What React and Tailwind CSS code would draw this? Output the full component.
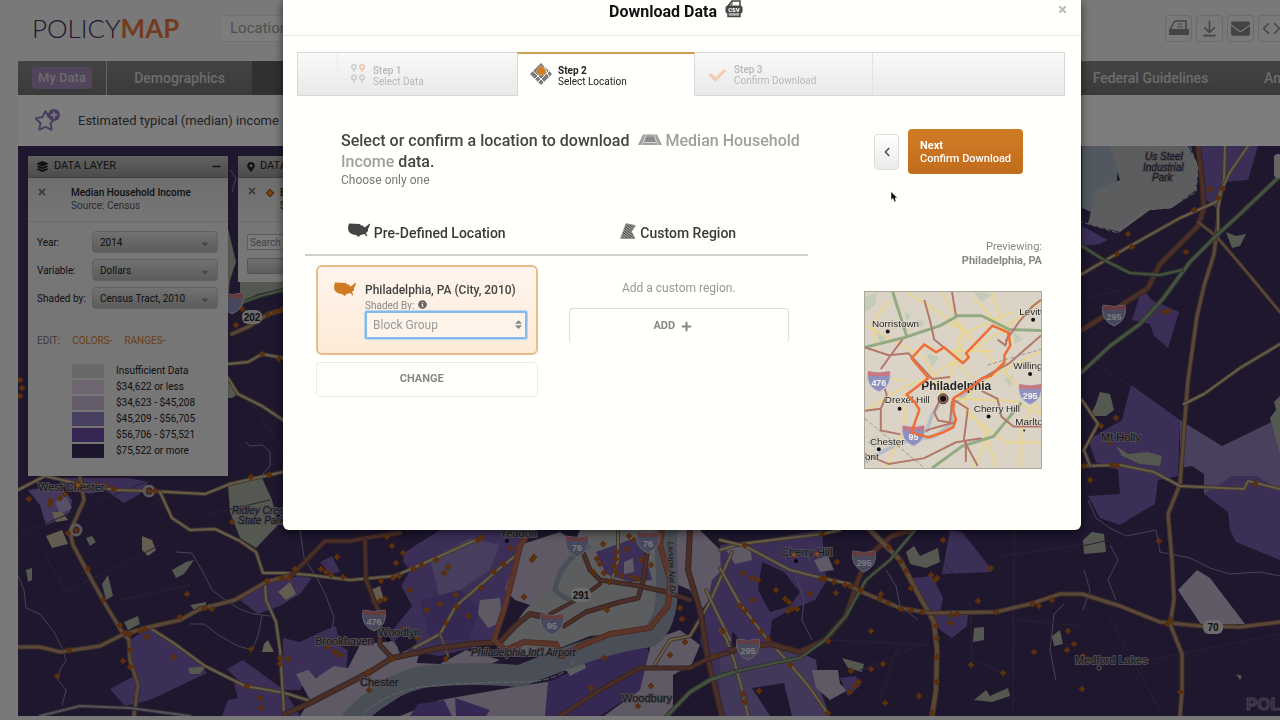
import {
  FaCaretDown,
  FaCheck,
  FaChevronLeft,
  FaEnvelope,
  FaInfoCircle,
  FaLayerGroup,
  FaMapMarkerAlt,
  FaMinus,
  FaPlus,
  FaRegStar,
  FaSort,
  FaTimes,
} from "react-icons/fa";
import { ArrowDownToLine, Code } from "lucide-react";

const legend = [
  { label: "Insufficient Data", color: "bg-[#d2d2d2]" },
  { label: "$34,622 or less", color: "bg-[#dccfe2]" },
  { label: "$34,623 - $45,208", color: "bg-[#cbb9d8]" },
  { label: "$45,209 - $56,705", color: "bg-[#927fc0]" },
  { label: "$56,706 - $75,521", color: "bg-[#6b4ca6]" },
  { label: "$75,522 or more", color: "bg-[#3a2c5a]" },
];

const filters = [
  { id: "year", label: "Year:", value: "2014" },
  { id: "variable", label: "Variable:", value: "Dollars" },
  { id: "shaded", label: "Shaded by:", value: "Census Tract, 2010" },
];

// tracts and land cover, drawn bottom to top
const areas = [
  // west
  ["#765cae", "60,478 130,478 148,482 140,494 124,503 105,490 90,494 66,490"],
  ["#8a70bc", "28,490 60,486 72,500 70,512 58,520 46,525 40,505"],
  ["#b0a0cc", "55,502 66,496 72,508 60,514"],
  ["#765cae", "148,628 165,638 200,663 207,673 150,700 125,706 110,689 134,676 130,640"],
  ["#765cae", "243,660 284,690 300,716 222,716 228,700 238,698 234,684 240,682 227,669"],
  ["#765cae", "258,614 245,604 240,600 268,582 300,576 312,578 300,594 280,606"],
  ["#765cae", "283,638 300,642 325,630 336,626 340,646 348,650 346,672 330,680 310,675 300,690 283,690"],
  ["#765cae", "320,562 332,556 340,572 330,574"],
  ["#beb2cc", "296,674 308,670 316,678 334,666 348,668 360,645 400,640 420,650 410,690 370,716 300,716 310,700"],
  // city and suburbs
  ["#765cae", "405,552 440,530 530,530 520,570 506,600 495,642 440,656 400,650 388,636 412,606 398,580"],
  ["#8c7cb8", "430,560 470,538 500,545 490,570 460,590 440,600"],
  ["#6b50a4", "420,600 460,590 480,610 468,640 430,640"],
  ["#3c2e5c", "395,640 408,630 420,632 416,644 400,654"],
  ["#3c2e5c", "366,560 392,548 410,570 398,592 376,590"],
  ["#beb2cc", "520,545 560,532 580,545 560,585 545,610 515,600 505,590"],
  ["#beb2cc", "480,600 500,598 502,622 488,628 478,614"],
  ["#b8babe", "500,645 525,610 560,575 580,530 668,530 668,600 640,632 590,636 545,654 500,656"],
  ["#beb2cc", "590,552 612,545 618,565 600,572"],
  ["#765cae", "596,552 640,536 652,580 630,582 606,574"],
  ["#beb2cc", "624,562 633,558 634,572 624,574"],
  ["#beb2cc", "350,700 395,662 440,664 466,650 500,660 470,672 410,672"],
  ["#beb2cc", "400,716 440,700 520,686 560,680 545,716"],
  ["#6b50a4", "410,716 418,704 444,700 452,716"],
  ["#6b50a4", "455,698 490,710 486,716 456,716"],
  ["#6b50a4", "545,716 548,682 570,672 590,650 620,642 642,636 652,660 640,690 600,716"],
  ["#b8babe", "560,660 580,652 586,668 570,676"],
  ["#beb2cc", "652,640 680,630 700,645 670,716 604,716 640,690"],
  ["#3c2e5c", "673,675 700,660 720,662 726,716 673,716"],
  ["#beb2cc", "672,530 700,530 722,552 724,580 700,612 690,590 676,584"],
  ["#765cae", "700,640 712,580 732,560 732,716 712,680"],
  // south jersey
  ["#765cae", "720,545 760,540 822,530 826,582 815,600 790,610 772,620 768,655 740,640 722,620"],
  ["#3c2e5c", "762,562 784,572 800,592 790,606 770,612 758,590"],
  ["#beb2cc", "725,548 750,546 752,560 735,564"],
  ["#beb2cc", "814,560 828,556 834,570 820,572"],
  ["#8470b4", "720,655 770,640 795,650 816,660 820,690 830,716 720,716"],
  ["#beb2cc", "812,670 838,670 840,684 848,690 830,700 816,688"],
  ["#765cae", "840,678 856,676 860,686 848,696"],
  ["#3c2e5c", "752,688 784,683 792,716 770,716"],
  ["#765cae", "942,574 950,530 962,532 992,570 990,572"],
  ["#765cae", "912,578 932,576 943,598 940,612 968,615 967,626 952,638 940,630"],
  // east edge
  ["#765cae", "1082,146 1112,146 1108,182 1100,200 1082,205"],
  ["#a4b0c0", "1082,146 1120,146 1116,190 1100,216 1082,208"],
  ["#b8babe", "1110,146 1188,146 1198,165 1196,190 1172,208 1150,210 1120,232 1088,224 1096,190 1120,180"],
  ["#765cae", "1198,146 1258,146 1248,180 1225,182 1216,208 1206,200 1204,176"],
  ["#765cae", "1082,226 1108,240 1100,244 1082,246"],
  ["#765cae", "1142,288 1152,300 1179,312 1168,348 1154,336 1150,324 1132,320"],
  ["#765cae", "1131,385 1180,420 1178,476 1158,480 1155,504 1138,514 1120,525 1100,518 1088,496 1120,494 1118,470 1096,462 1088,440 1122,420"],
  ["#9080b8", "1180,420 1222,446 1280,418 1280,490 1228,498 1204,494 1204,474 1192,466 1180,468"],
  ["#765cae", "1204,494 1232,476 1256,476 1280,490 1280,560 1236,542 1230,530 1228,512"],
  ["#c0b2cc", "1197,570 1210,578 1245,624 1202,626 1178,590"],
  // parks
  ["#a8b0a0", "228,485 262,478 272,500 278,525 256,548 240,538 230,512"],
  ["#a8b0a0", "228,228 236,262 230,280 228,300"],
  ["#a8b0a0", "240,281 283,281 283,288 258,294 240,302"],
  ["#a8b0a0", "228,382 238,394 232,398 228,398"],
  ["#a8b0a0", "1100,392 1110,394 1114,410 1106,416 1090,416 1096,404"],
  ["#a8b0a0", "1116,446 1128,454 1148,452 1162,456 1160,466 1140,464 1122,456"],
  ["#a8b0a0", "1226,232 1236,236 1246,234 1240,246 1232,248"],
  ["#a8b0a0", "1092,532 1104,534 1106,552 1084,554 1083,540"],
  ["#a8b0a0", "906,552 914,546 920,556 938,548 940,562 926,568 910,564"],
  ["#a8b0a0", "974,628 984,627 984,640 973,642"],
  ["#a8b0a0", "1052,636 1060,630 1063,644 1054,646"],
  ["#a8b0a0", "974,700 986,690 990,696 1008,688 1010,696 992,702"],
  ["#a8b0a0", "842,658 864,664 862,672 848,668"],
  ["#a8b0a0", "172,570 186,562 194,560 184,574 176,578"],
  ["#a8b0a0", "124,622 138,616 140,624 128,630"],
  ["#a8b0a0", "102,584 108,575 113,596 106,600"],
  ["#a8b0a0", "26,570 32,568 32,580 28,582"],
  ["#a8b0a0", "86,538 92,536 96,542 90,546"],
  ["#a8b0a0", "188,668 206,666 200,674 190,674"],
  ["#a8b0a0", "190,605 206,602 206,608 194,610"],
  ["#a8b0a0", "1280,396 1274,402 1276,410 1270,418 1280,454"],
  ["#a8b0a0", "1236,674 1242,676 1240,680"],
  ["#c8b8a0", "46,536 62,530 68,544 52,548"],
  ["#c8b8a0", "142,536 152,540 156,550 148,556 142,550"],
  ["#c8b8a0", "52,512 62,512 68,520 56,522"],
  ["#c8b8a0", "278,592 290,582 296,594 286,600"],
  ["#c8b8a0", "370,590 380,586 384,600 372,604"],
  ["#c8b8a0", "264,644 268,640 274,652 262,652"],
];

const creeks = [
  "18,576 24,590 26,608 40,614 54,632 62,648 66,660 60,670 58,680 66,690 62,706",
  "176,552 192,553 204,574 212,590 228,602 242,610 254,614 270,616",
  "190,624 204,624 220,636 238,646 252,650 258,636 262,616",
  "300,530 304,558 318,580 326,596 334,618 332,630",
  "1088,500 1096,518 1110,528 1126,536 1156,530 1160,552 1190,558 1210,568 1230,574 1260,572 1280,576",
  "1110,545 1118,560 1108,580 1116,600",
  "1083,610 1090,590 1084,570",
  "886,570 896,586 900,606 918,620",
  "796,576 804,600 802,620 812,640",
  "1064,604 1054,614 1050,650 1056,680",
  "246,442 250,446 262,445 270,452 270,466 262,475",
  "230,170 236,178 232,192",
];

const roads = [
  ["yellow", 3, "18,490 45,476 75,483 115,490 150,491 205,494 230,484 256,478 283,472"],
  ["yellow", 3, "160,492 172,518 190,530 215,529 240,541 256,552 263,573 285,573 310,575 350,580 395,576 440,556 480,538"],
  ["yellow", 3, "150,628 175,644 205,666 245,686 285,693 310,701"],
  ["yellow", 3, "265,582 266,600 276,622 280,650 284,712"],
  ["yellow", 3, "228,364 248,362 262,354 283,358"],
  ["yellow", 3, "228,378 238,394 262,406 283,420"],
  ["yellow", 3, "414,648 440,634 456,606 500,568 520,552"],
  ["yellow", 2, "440,634 448,656"],
  ["yellow", 3, "618,530 618,560 612,580"],
  ["yellow", 3, "655,664 670,640 690,636 710,602 732,552"],
  ["yellow", 3, "706,590 730,640"],
  ["yellow", 3, "720,550 740,544 822,534 840,530"],
  ["yellow", 3, "720,540 745,546 790,570 822,578 850,584"],
  ["yellow", 3, "720,568 740,604 768,640 790,664 810,688 828,714"],
  ["yellow", 3, "720,630 726,638 734,660 742,690 748,716"],
  ["orange", 4, "80,478 84,500 70,532 73,545 88,573 104,602 122,632 129,640 130,660 138,685 134,715"],
  ["orange", 4, "18,647 40,647 60,652 100,646 122,635 145,628 180,620 200,609 235,600 266,582 292,575"],
  ["brown", 4, "292,575 325,541 350,541 372,537 400,533"],
  ["orange", 4, "232,334 250,326 268,314 283,310"],
  ["brown", 5, "285,714 310,703 370,672 392,658 440,648 470,644 500,642 515,626 530,614 550,618"],
  ["brown", 4, "365,540 366,580 378,610 380,645 392,658"],
  ["brown", 3, "550,614 580,598 600,584"],
  ["brown", 4, "564,626 586,612 620,602 638,598 644,578 648,545"],
  ["brown", 4, "580,545 590,570 600,580 640,586 666,592 690,600"],
  ["brown", 5, "690,530 688,570 700,610 708,660 722,716"],
  ["brown", 4, "560,716 600,690 640,668 690,668 705,660 736,650"],
  ["boundary", 5, "530,530 520,546 512,580 504,610 494,640 506,650 524,642 556,644 562,656 580,646 610,634 650,628 668,606 670,580 660,545 662,530"],
  ["brown", 5, "1198,146 1202,180 1204,208 1198,226 1180,244 1160,264 1148,288 1120,306 1082,330"],
  ["brown", 5, "730,650 770,644 800,652 825,640 846,616 858,580 868,556 892,536 912,530"],
  ["orange", 5, "870,530 900,560 916,590 934,622 937,650 936,690 932,716"],
  ["orange", 4, "850,586 862,592 900,608 930,613 996,612 1030,604 1060,594 1082,594 1120,606 1160,622 1200,626 1240,627 1280,622"],
  ["orange", 4, "1218,222 1214,254 1204,286 1197,316 1192,352 1188,380 1184,430 1180,484 1168,514 1172,560 1174,600 1170,624 1182,654 1182,690 1180,716"],
  ["yellow", 3, "1225,146 1224,180 1218,208 1218,240"],
  ["yellow", 3, "1248,146 1230,172 1216,202 1180,218 1130,246 1082,274"],
  ["orange", 3, "1198,222 1216,236 1240,264 1280,312"],
  ["yellow", 3, "1184,404 1204,394 1240,368 1280,344"],
  ["yellow", 3, "1082,466 1120,465 1154,472 1180,486 1244,489 1248,481 1280,489"],
  ["yellow", 3, "1082,400 1098,424 1084,450 1090,466"],
  ["green", 4, "1280,176 1240,214 1216,236 1190,262 1162,300 1140,324 1110,346 1082,372"],
  ["green", 3, "1082,246 1104,260 1130,273 1160,275 1182,270"],
  ["green", 3, "915,530 890,560 866,580 846,616 825,640 800,658 770,664 720,675"],
  ["green", 4, "667,716 690,692 710,680 734,672"],
  ["green", 3, "238,304 260,296 283,290"],
  ["gray", 3, "40,716 80,706 130,708 160,712 190,716"],
];

const roadColors = {
  yellow: ["#84705c", "#cdb890"],
  orange: ["#7c6050", "#b48e70"],
  brown: ["#70483e", "#945e50"],
  boundary: ["#9c5848", "#b86a54"],
  green: ["#5c6c58", "#8aa480"],
  gray: ["#5c5868", "#a8a4b0"],
};

const markers = [
  [29, 499], [50, 501], [50, 504], [60, 498], [65, 494], [76, 486], [78, 484], [93, 487], [99, 485], [106, 486], [114, 489],
  [149, 491], [155, 491], [251, 477], [269, 475], [232, 522], [68, 533], [76, 530], [88, 569], [103, 600], [120, 625],
  [125, 633], [130, 634], [140, 631], [145, 629], [147, 637], [180, 617], [187, 594], [205, 608], [212, 609], [267, 581],
  [282, 578], [289, 578], [295, 569], [321, 569], [326, 572], [331, 575], [343, 577], [337, 557], [69, 650], [130, 650],
  [123, 661], [130, 667], [57, 676], [174, 657], [247, 686], [260, 698], [261, 708], [251, 649], [280, 658], [288, 659],
  [280, 664], [319, 638], [328, 647], [335, 652], [340, 655], [236, 325], [242, 309], [268, 315], [275, 312], [281, 310],
  [262, 354], [279, 359], [20, 380], [22, 388], [20, 396], [392, 546], [403, 553], [396, 563], [387, 537], [436, 560],
  [448, 567], [444, 573], [414, 569], [422, 565], [399, 576], [393, 578], [381, 581], [410, 590], [456, 595], [440, 604],
  [427, 610], [457, 607], [469, 616], [446, 623], [481, 588], [494, 572], [503, 564], [511, 548], [534, 557], [532, 560],
  [524, 597], [478, 540], [482, 537], [380, 601], [385, 599], [404, 629], [410, 632], [417, 638], [446, 659], [392, 659],
  [368, 672], [369, 690], [603, 544], [597, 559], [600, 564], [593, 572], [604, 573], [617, 552], [616, 559], [615, 566],
  [616, 572], [622, 576], [627, 549], [632, 577], [638, 579], [641, 560], [651, 565], [609, 582], [607, 610], [629, 536],
  [634, 540], [680, 608], [682, 619], [685, 642], [670, 655], [604, 658], [591, 688], [651, 686], [638, 706], [723, 631],
  [715, 656], [745, 545], [794, 555], [817, 554], [822, 534], [837, 562], [743, 573], [752, 578], [758, 580], [776, 590],
  [810, 594], [821, 579], [825, 578], [834, 582], [845, 585], [851, 586], [836, 593], [785, 599], [789, 602], [792, 609],
  [797, 609], [788, 611], [752, 600], [740, 606], [745, 611], [753, 621], [761, 632], [768, 639], [828, 641], [871, 631],
  [861, 590], [881, 594], [880, 599], [888, 603], [901, 609], [911, 610], [922, 612], [889, 547], [901, 561], [906, 571],
  [911, 588], [931, 575], [935, 580], [937, 578], [943, 540], [991, 568], [978, 601], [951, 615], [957, 614], [950, 623],
  [936, 626], [937, 638], [937, 657], [937, 682], [932, 713], [996, 612], [1033, 604], [1039, 606], [1052, 600],
  [1068, 631], [1074, 644], [1067, 650], [1034, 652], [971, 665], [1003, 673], [883, 664], [871, 669], [851, 671],
  [859, 682], [855, 686], [850, 692], [790, 665], [743, 694], [745, 702], [759, 691], [828, 713], [885, 703], [919, 696],
  [1210, 189], [1223, 189], [1218, 198], [1194, 210], [1128, 234], [1132, 247], [1117, 254], [1186, 252], [1164, 312],
  [1168, 311], [1116, 418], [1101, 426], [1110, 442], [1084, 466], [1112, 465], [1117, 466], [1090, 480], [1159, 541],
  [1255, 484], [1167, 624], [1171, 620], [1083, 656], [1082, 689], [1180, 692],
];

const labels = [
  ["West Chester", 38, 491],
  ["Yeadon", 500, 537],
  ["Chester", 360, 686],
  ["Brookhaven", 315, 645],
  ["Woodlyn", 378, 636],
  ["Cherry Hill", 781, 556],
  ["Woodbury", 622, 702],
  ["Mt Holly", 1101, 441],
  ["Medford Lakes", 1075, 664],
];

const Shield = ({ x, y, label }) => (
  <g transform={`translate(${x} ${y})`}>
    <path d="M-11 -9 Q0 -6 11 -9 Q14 6 0 12 Q-14 6 -11 -9Z" fill="#8f91bc" stroke="#c8c8d8" />
    <path d="M-11 -9 Q0 -6 11 -9 L11 -4 L-11 -4Z" fill="#c87880" />
    <text y="6" textAnchor="middle" fontSize="9" fontWeight="700" fill="#f4f4f4">
      {label}
    </text>
  </g>
);

const RouteBadge = ({ x, y, label }) => (
  <g transform={`translate(${x} ${y})`}>
    <rect x="-10" y="-7" width="20" height="14" rx="6" fill="#d8d8d8" />
    <text y="4" textAnchor="middle" fontSize="10" fontWeight="700" fill="#222222">
      {label}
    </text>
  </g>
);

const IncomeMap = () => (
  <svg
    className="absolute inset-0 h-full w-full font-['Liberation_Sans',sans-serif]"
    viewBox="18 146 1262 570"
    preserveAspectRatio="xMinYMin slice"
    aria-label="Median household income map"
  >
    <rect x="18" y="146" width="1600" height="900" fill="#3c2e5c" />
    {areas.map(([fill, points]) => (
      <polygon key={points} points={points} fill={fill} />
    ))}
    <path
      d="M350 722 Q390 680 430 676 T520 676 Q560 660 590 650 T650 636 Q672 620 666 560 V520"
      fill="none"
      stroke="#949fae"
      strokeWidth="22"
    />
    <path
      d="M360 718 Q385 690 430 686 T520 682 T575 658"
      fill="none"
      stroke="#c8c8c8"
      strokeDasharray="6 2"
    />
    <path d="M590 545 Q560 560 555 590 Q575 610 590 590" fill="none" stroke="#949fae" strokeWidth="5" />
    {creeks.map((points) => (
      <polyline key={points} points={points} fill="none" stroke="#8c86a8" strokeWidth="1" />
    ))}
    <g fill="none" stroke="#504468" strokeWidth="1">
      <path d="M18 535 L150 480 M45 555 L66 592 L160 545 M120 600 L190 585 M150 490 L175 520 M205 515 L270 500" />
      <path d="M830 640 L930 645 M900 660 L860 670 L920 645 M970 590 L940 560 M1014 530 L1013 716 M1000 556 L1082 545" />
      <path d="M1082 546 L1110 540 M1108 615 L1160 710 M1130 664 L1280 634 M1090 360 L1130 386 M1082 300 L1120 290" />
      <path d="M1016 620 L1082 626 M970 600 L972 660 L1010 675 M880 700 L900 640 M250 400 L283 450" />
    </g>
    {roads.map(([kind, width, points]) => (
      <g key={points} fill="none" strokeLinejoin="round" strokeLinecap="round">
        <polyline points={points} stroke={roadColors[kind][0]} strokeWidth={width + 1} />
        <polyline points={points} stroke={roadColors[kind][1]} strokeWidth={width - 1} />
      </g>
    ))}
    <path d="M1190 146 L1198 168 L1196 192 L1170 208 L1145 210 L1118 233 L1082 222" fill="none" stroke="#d0d0c8" strokeDasharray="5 2" />
    <g fill="none" stroke="#b4b0bc" strokeWidth="3">
      <circle cx="76" cy="530" r="5" />
      <circle cx="149" cy="491" r="5" />
    </g>
    <g fill="#d09060" stroke="#b05c18" strokeWidth="2">
      {markers.map(([x, y]) => (
        <path key={`${x}-${y}`} d={`M${x} ${y - 2}l2 2l-2 2l-2 -2z`} />
      ))}
    </g>
    <g fontSize="11" fill="#2c2838" stroke="#9c98a4" strokeWidth="2" paintOrder="stroke">
      {labels.map(([label, x, y]) => (
        <text key={label} x={x} y={y}>
          {label}
        </text>
      ))}
      <g fontStyle="italic" fontSize="10">
        <text x="232" y="514">Ridley Creek</text>
        <text x="238" y="524">State Park</text>
        <text x="1145" y="160">Us Steel</text>
        <text x="1143" y="171">Industrial</text>
        <text x="1152" y="181">Park</text>
        <text x="471" y="656">Philadelphia Int'l Airport</text>
        <text x="0" y="0" fontSize="8" transform="translate(668 542) rotate(88)">Lenape Nat Dr</text>
      </g>
    </g>
    <g fill="#f09858" stroke="#b85c18">
      <path d="M794 552l3 3l-3 3l-3 -3z" />
      <path d="M817 551l3 3l-3 3l-3 -3z" />
      <path d="M78 482l3 3l-3 3l-3 -3z" />
    </g>
    <circle cx="507" cy="541" r="2" fill="#111111" />
    <circle cx="388" cy="640" r="2" fill="#111111" />
    <circle cx="796" cy="561" r="2" fill="#111111" />
    <circle cx="1099" cy="668" r="2" fill="#111111" stroke="#c8c8c8" />
    <Shield x={374} y={619} label="476" />
    <Shield x={577} y={545} label="76" />
    <Shield x={648} y={541} label="76" />
    <Shield x={552} y={623} label="95" />
    <Shield x={748} y={648} label="295" />
    <Shield x={864} y={560} label="295" />
    <Shield x={1114} y={314} label="295" />
    <Shield x={232} y={302} label="" />
    <RouteBadge x={252} y={317} label="202" />
    <RouteBadge x={581} y={595} label="291" />
    <RouteBadge x={1213} y={627} label="70" />
    <rect x="1274" y="154" width="20" height="24" rx="4" fill="#c8c8c8" />
    <text x="1246" y="710" fontSize="17" fontWeight="700" fill="#5c5478" stroke="#8c88a0" strokeWidth="1">
      POLICYMAP
    </text>
  </svg>
);

const UsIcon = ({ className }) => (
  <svg className={className} viewBox="0 0 22 15" fill="currentColor" aria-hidden="true">
    <path d="M1 0.5 L12 1 L13 2.5 L15 2.5 L16 4.500 L18 3.500 L20 2 L21 0.5 L22 1.5 L21 4 L20 6 L20 8 L18 10 L19.500 13.500 L18 13 L16.500 11 L12.500 12 L10.500 14 L8 12 L5 11.5 L2 10 L0.5 8 L0 4Z" />
  </svg>
);

const RegionIcon = ({ className }) => (
  <svg className={className} viewBox="0 0 16 16" aria-hidden="true">
    <defs>
      <pattern id="hatch" width="2" height="2" patternUnits="userSpaceOnUse" patternTransform="rotate(-52)">
        <rect width="1.4" height="2" fill="#3f3f3f" />
      </pattern>
    </defs>
    <path d="M6 0.5 L15.5 2.5 L11.5 8.5 L15 15.5 L0.5 15.5Z" fill="url(#hatch)" stroke="#777777" strokeWidth="0.5" />
  </svg>
);

const CsvIcon = ({ className }) => (
  <svg className={className} viewBox="0 0 18 18" fill="none" stroke="#444444" aria-hidden="true">
    <path d="M3 6 L7 1 H15 V6" strokeWidth="1.5" />
    <path d="M7 1 V5 H3" />
    <rect x="1" y="6" width="16" height="7" rx="1.5" fill="#444444" />
    <path d="M3 13 V16.5 H15 V13" strokeWidth="1.5" fill="#aaaaaa" />
    <text x="9" y="12" textAnchor="middle" fontSize="6" fontWeight="900" fill="#ffffff" stroke="none">
      CSV
    </text>
  </svg>
);

// street blocks seen from above, with the picked block in orange
const LocationIcon = ({ className }) => (
  <svg className={className} viewBox="0 0 22 22" aria-hidden="true">
    <path d="M11 0 L22 11 L11 22 L0 11Z" fill="#7c7c7c" />
    <path d="M3 8 L14 19 M8 19 L19 8 M5 16 L9 12 M14 3 L19 14" stroke="#f4f4f0" strokeWidth="1" />
    <path d="M11 2.500 L16 7.500 L14 12 L9 12 L6 8Z" fill="#d07a22" stroke="#e8c8a8" strokeWidth="0.5" />
  </svg>
);

const LayerIcon = ({ className }) => (
  <svg className={className} viewBox="0 0 24 12" aria-hidden="true">
    <path d="M5 0.5 H19 L24 11 H0Z" fill="#a0a0a0" />
    <path d="M8 3 H16 L17 8 H7Z" fill="#8c8c8c" />
    <path d="M4 11 L8 1 M20 11 L16 1 M6 8.500 H18" stroke="#e4e4e0" strokeWidth="0.8" fill="none" />
  </svg>
);

const PinsIcon = ({ className }) => (
  <svg className={className} viewBox="0 0 14 20" fill="none" strokeWidth="1.5" aria-hidden="true">
    <path d="M3 8 V5 M3 18.500 V15.500 M11 18.500 V15.500" stroke="#cccccc" />
    <circle cx="3" cy="3" r="2.200" stroke="#cccccc" />
    <circle cx="3" cy="13.500" r="2.200" stroke="#cccccc" />
    <circle cx="11" cy="13.500" r="2.200" stroke="#cccccc" />
    <path d="M11 8 V5" stroke="#f0c0ac" />
    <circle cx="11" cy="3" r="2.200" stroke="#f0c0ac" />
  </svg>
);

const PrinterIcon = ({ className }) => (
  <svg className={className} viewBox="0 0 20 16" aria-hidden="true">
    <path d="M1 10 L5 2 Q6 1 8 1 H17 V10Z" fill="none" stroke="#888888" strokeWidth="1.5" />
    <path d="M9 4 H14 M8 7 H14" stroke="#888888" />
    <path d="M0 9 H20 V15 H0Z" fill="#888888" />
  </svg>
);

const PreviewMap = () => (
  <svg
    className="block aspect-square w-full border border-[#aaa69c] font-['Liberation_Sans',sans-serif]"
    viewBox="0 0 178 178"
    aria-label="Preview of Philadelphia, PA"
  >
    <rect width="178" height="178" fill="#dbd3c5" />
    <g fill="#c4ccb8">
      <path d="M0 5 L12 0 L10 14 L0 20Z M110 0 L130 2 L118 10Z M62 62 L75 66 L68 76Z M40 20 L46 24 L42 30Z M12 40 L22 46 L16 52Z" />
      <path d="M150 40 L160 48 L152 52Z M2 152 L14 144 L10 158Z M140 88 L150 84 L148 96Z M52 28 L60 30 L56 36Z" />
    </g>
    <g fill="none" stroke="#b8bec6" strokeWidth="4">
      <path d="M0 172 L20 160 L44 150 L70 146 L88 134 L90 112 L108 98 L140 74" />
      <path d="M62 142 L68 124 L76 112" />
    </g>
    <g fill="none" stroke="#e9d590" strokeWidth="2">
      <path d="M42 0 L70 18 L98 36 L120 60 L150 90 L178 120 M0 34 L60 66 L76 100 M78 0 L98 36 L88 80 L76 106" />
      <path d="M128 0 L140 34 M0 120 L40 96 L66 86 L130 44 L178 10 M20 178 L40 140 L40 100 M178 60 L130 84 L98 110" />
      <path d="M98 110 L120 140 L134 178 M90 108 L150 110 L178 124 M104 40 L90 70 L110 88 M86 60 L130 60 M0 82 L40 90" />
      <path d="M100 120 L142 152 L178 152 M80 30 L104 40 L150 20 M110 6 L150 50 M156 178 L158 140 L178 96 M12 60 L8 30 L24 10 M126 140 L110 178" />
    </g>
    <g fill="none" stroke="#93ab82" strokeWidth="3">
      <path d="M0 56 L40 46 L76 34 L94 24 H118 L146 38 L178 39 M28 0 L42 44 M68 178 L98 156 L130 146 L158 112" />
    </g>
    <g fill="none" stroke="#b2786a" strokeWidth="2">
      <path d="M60 8 L66 30 L70 48 L82 58 M88 0 L92 24 M0 56 L24 64 L44 62 L68 88 L86 86 M16 78 L26 64 L38 48" />
      <path d="M0 164 L24 174 L60 168 L92 152 L118 148 M76 108 L70 122 L74 130 L86 132 L88 110 M88 108 L104 118 L100 150 L114 176" />
      <path d="M178 44 L146 72 L110 92 L96 104 M142 50 L156 30 L170 14 L178 8 M20 98 L22 104 L16 118 V140 L36 144 M0 120 L16 118" />
      <path d="M118 100 L134 108 L138 126 L150 136 H178 M134 48 L142 54 L146 40 M58 142 L68 138 L90 132 M102 150 V172" />
    </g>
    <path d="M124 74 L150 66 L178 58 M0 128 L60 178" fill="none" stroke="#999999" strokeDasharray="4 2" />
    <Shield x={14} y={89} label="476" />
    <Shield x={167} y={102} label="295" />
    <Shield x={49} y={144} label="95" />
    <g fontSize="10" fill="#222222" stroke="#e8e2d6" strokeWidth="1" paintOrder="stroke">
      <text x="7" y="35">Norristown</text>
      <text x="156" y="23">Levittown</text>
      <text x="150" y="78">Willingboro</text>
      <text x="20" y="112">Drexel Hill</text>
      <text x="110" y="121">Cherry Hill</text>
      <text x="152" y="135">Marlton</text>
      <text x="5" y="155">Chester</text>
      <text x="0" y="170">ont</text>
      <text x="57" y="99" fontSize="12" fontWeight="700">Philadelphia</text>
    </g>
    <polygon
      points="129,34 145,41 147,54 141,64 141,71 127,85 119,87 107,97 90,107 89,119 92,129 89,137 79,142 64,147 47,142 55,119 50,111 42,104 64,87 47,67 60,53 72,61 80,56 99,72 105,66 102,62"
      fill="none"
      stroke="#f26c35"
      strokeWidth="2.500"
      strokeLinejoin="round"
    />
    <circle cx="79" cy="108" r="5" fill="#9c6c60" stroke="#4c342c" />
    <g fill="#111111">
      <circle cx="79" cy="108" r="3" />
      <circle cx="23" cy="40" r="2" />
      <circle cx="170" cy="28" r="2" />
      <circle cx="167" cy="83" r="2" />
      <circle cx="35" cy="118" r="2" />
      <circle cx="125" cy="126" r="2" />
      <circle cx="161" cy="140" r="1" />
      <circle cx="14" cy="159" r="2" />
    </g>
  </svg>
);

const Header = () => (
  <header className="flex h-[61px] items-center pb-[5px] pl-8">
    <h1 className="w-[188px] shrink-0 font-['Lato',sans-serif] text-[26px] leading-7 font-light text-[#3c2e5c]">
      POLICY<span className="font-bold text-[#e8783c]">MAP</span>
    </h1>
    <input
      type="text"
      aria-label="Location"
      placeholder="Location"
      className="h-[27px] w-80 rounded border border-[#e4e4e4] bg-[#f8f8f8] px-[9px] text-[15px] placeholder:text-[#a0a0a0]"
    />
    <div className="ml-auto flex w-[115px] shrink-0 gap-1 text-[#888888]">
      <button aria-label="Print" className="flex size-[27px] shrink-0 items-center justify-center rounded-sm border border-[#d4d4d4]">
        <PrinterIcon className="h-4 w-5" />
      </button>
      <button aria-label="Download" className="flex size-[27px] shrink-0 items-center justify-center rounded-sm border border-[#d4d4d4]">
        <ArrowDownToLine size={19} />
      </button>
      <button aria-label="Email" className="flex size-[27px] shrink-0 items-center justify-center rounded-sm border border-[#d4d4d4]">
        <FaEnvelope size={19} />
      </button>
      <button aria-label="Embed" className="flex size-[27px] shrink-0 items-center justify-center rounded-sm border border-[#d4d4d4]">
        <Code size={19} />
      </button>
    </div>
  </header>
);

const NavBar = () => (
  <nav className="ml-[18px] flex h-[34px] bg-[#606060] text-[14px] font-medium text-[#d8d8d8]">
    <div className="flex w-[89px] shrink-0 items-center justify-center border-r border-[#c8c8c8] bg-linear-to-b from-[#888888] to-[#747474]">
      <a href="#my-data" className="rounded-sm bg-[#a488b4] px-[6px] py-[1px] text-[13px] leading-5">
        My Data
      </a>
    </div>
    <a href="#demographics" className="flex w-[145px] shrink-0 items-center justify-center bg-linear-to-b from-[#888888] to-[#747474]">
      Demographics
    </a>
    <div className="flex-1" />
    <a href="#federal" className="flex w-[184px] shrink-0 items-center justify-center border-r border-[#808080] bg-linear-to-b from-[#888888] to-[#747474]">
      Federal Guidelines
    </a>
    <a href="#analytics" className="flex w-[37px] shrink-0 items-center overflow-hidden bg-linear-to-b from-[#888888] to-[#747474] pl-[21px]">
      Analytics
    </a>
  </nav>
);

const DataLayerPanel = () => (
  <section className="w-50 bg-[#ededed] shadow-sm">
    <div className="flex h-[22px] items-center border-b border-[#808080] bg-linear-to-b from-[#c4c4c4] to-[#989898] pr-[7px] pl-[9px] text-[11px] text-[#222222]">
      <FaLayerGroup size={11} />
      <h2 className="ml-[6px]">DATA LAYER</h2>
      <button aria-label="Collapse" className="ml-auto">
        <FaMinus size={9} />
      </button>
    </div>
    <div className="flex h-[44px] border-b border-[#d8d8d8] bg-linear-to-b from-[#dcdcdc] to-[#ededed] pt-2 pl-[9px]">
      <button aria-label="Remove layer" className="h-3 w-[34px] text-[#777777]">
        <FaTimes size={10} />
      </button>
      <div className="text-[10px] leading-[13px]">
        <p className="font-medium text-[#222222]">Median Household Income</p>
        <p className="text-[#555555]">Source: Census</p>
      </div>
    </div>
    <div className="flex flex-col gap-[6px] pt-[9px] pr-[10px] pl-[9px] text-[11px] text-[#222222]">
      {filters.map((f) => (
        <div key={f.id} className="flex items-center">
          <label htmlFor={f.id} className="w-[55px] text-[10px]">
            {f.label}
          </label>
          <div className="relative flex-1">
            <select
              id={f.id}
              className="h-[22px] w-full appearance-none rounded border border-[#c0c0c0] bg-linear-to-b from-[#e4e4e4] to-[#b8b8b8] px-[7px] text-[10px]"
            >
              <option>{f.value}</option>
            </select>
            <FaCaretDown size={10} className="pointer-events-none absolute top-2 right-2 text-[#888888]" />
          </div>
        </div>
      ))}
    </div>
    <div className="flex gap-3 pt-[24px] pl-[9px] text-[10px] leading-4 text-[#777777]">
      <span>EDIT:</span>
      <a href="#colors" className="text-[#d87c28]">COLORS-</a>
      <a href="#ranges" className="text-[#d87c28]">RANGES-</a>
    </div>
    <ul className="pt-[14px] pb-[17px] pl-[44px]">
      {legend.map((l) => (
        <li key={l.label} className="flex h-4 items-center gap-3 text-[10px] leading-4 text-[#222222]">
          <span className={`h-[14px] w-8 ${l.color}`} />
          {l.label}
        </li>
      ))}
    </ul>
  </section>
);

const DataPointsPanel = () => (
  <section className="h-[126px] w-50 bg-[#ededed] text-[10px] text-[#222222]">
    <div className="flex h-[22px] items-center gap-1 border-b border-[#808080] bg-linear-to-b from-[#c4c4c4] to-[#989898] pl-[8px] text-[11px]">
      <FaMapMarkerAlt size={10} />
      <h2>DATA POINTS</h2>
    </div>
    <div className="flex h-[44px] items-start border-b border-[#d8d8d8] bg-linear-to-b from-[#dcdcdc] to-[#ededed] pt-2 pl-[9px]">
      <button aria-label="Remove points" className="w-5 text-[#777777]">
        <FaTimes size={10} />
      </button>
      <span className="mt-1 mr-[7px] size-[6px] rotate-45 border border-[#a05010] bg-[#ee8830]" />
      <div className="leading-[13px]">
        <p className="font-medium">Education</p>
        <p>Source</p>
      </div>
    </div>
    <div className="flex flex-col gap-2 pt-3 pr-2 pl-[9px]">
      <input
        type="text"
        aria-label="Search points"
        placeholder="Search points"
        className="h-4 border border-[#bbbbbb] bg-[#f4f4f4] px-[2px] placeholder:text-[#888888]"
      />
      <button aria-label="Filter" className="h-4 rounded-xs border border-[#aaaaaa] bg-linear-to-b from-[#dddddd] to-[#bbbbbb]" />
    </div>
  </section>
);

const Steps = () => (
  <ol className="mr-4 ml-[14px] flex h-11 border border-[#d8d8d8] bg-linear-to-b from-[#f9f9f9] to-[#e9e9e9] text-[10px] leading-[11px]">
    <li className="w-[40px] shrink-0 border-r border-[#ececec]" aria-hidden="true" />
    <li className="flex w-[179px] shrink-0 items-center gap-2 pt-1 pl-[13px] text-[#b8b8b8]">
      <PinsIcon className="-mt-1 h-5 w-[14px]" />
      <div>
        <p className="font-medium">Step 1</p>
        <p>Select Data</p>
      </div>
    </li>
    <li className="-mt-px -mb-px flex w-[178px] shrink-0 items-center gap-[6px] border-t-2 border-r border-l border-t-[#d0a050] border-r-[#d8d8d8] border-l-[#d8d8d8] bg-[#fffffb] pt-[2px] pl-3 text-[#222222]">
      <LocationIcon className="-mt-1 size-[22px]" />
      <div>
        <p className="font-bold">Step 2</p>
        <p>Select Location</p>
      </div>
    </li>
    <li className="flex w-[178px] shrink-0 items-center gap-2 border-r border-[#e2e2e2] pt-[2px] pl-[14px] text-[#b8b8b8]">
      <FaCheck size={17} className="text-[#f4ccb4]" />
      <div>
        <p className="font-medium">Step 3</p>
        <p>Confirm Download</p>
      </div>
    </li>
  </ol>
);

const DownloadDialog = () => (
  <div
    role="dialog"
    aria-labelledby="dialog-title"
    className="relative h-fit w-[798px] rounded-b-md bg-[#fffffb] pb-[61px] text-[#444444] shadow-[0_2px_10px_rgba(0,0,0,0.6)]"
  >
    <div className="relative mb-4 flex h-9 items-start justify-center gap-2 border-b border-[#e8e8e6] pr-3">
      <h2 id="dialog-title" className="pt-[2px] text-[16px] leading-5 font-bold text-[#111111]">
        Download Data
      </h2>
      <CsvIcon className="size-[18px]" />
      <button aria-label="Close" className="absolute top-1 right-[13px] text-[#bbbbbb]">
        <FaTimes size={11} />
      </button>
    </div>

    <Steps />

    <div className="flex pt-[33px] pr-[39px] pl-[22px]">
      <div className="w-[503px] shrink-0">
        <div className="pt-px pl-9">
          <h3 className="text-[16px] leading-[21px] font-medium">
            Select or confirm a location to download{" "}
            <span className="text-[#a0a0a0]">
              <LayerIcon className="mx-1 inline h-3 w-6 align-baseline" />
              Median Household Income
            </span>{" "}
            data.
          </h3>
          <p className="text-[12px] leading-4 text-[#777777]">Choose only one</p>
        </div>

        <div className="mt-[34px] grid grid-cols-2 border-b-2 border-[#cfcfcb] pb-[11px] text-[14px] leading-5 font-medium text-[#3a3a3a]">
          <h4 className="flex items-start justify-center gap-1 pt-px pr-2">
            <UsIcon className="h-[15px] w-[22px] text-[#444444]" />
            Pre-Defined Location
          </h4>
          <h4 className="flex items-start justify-center gap-1 pt-px pr-2">
            <RegionIcon className="size-4" />
            Custom Region
          </h4>
        </div>

        <div className="grid grid-cols-2">
          <div className="pt-[9px] pr-[19px] pl-[11px]">
            <div className="flex h-[90px] gap-[9px] rounded-md border-2 border-[#e8bd8c] bg-linear-to-b from-[#fff4ee] to-[#fdebd6] pt-[13px] pl-4">
              <UsIcon className="mt-[2px] h-[15px] w-[22px] shrink-0 text-[#d07a22]" />
              <div>
                <p className="text-[12px] leading-5 font-medium">Philadelphia, PA (City, 2010)</p>
                <label htmlFor="shade" className="flex h-[11px] items-start gap-1 text-[10px] leading-[11px] text-[#888888]">
                  Shaded By: <FaInfoCircle size={9} className="text-[#666666]" />
                </label>
                <div className="relative w-[162px]">
                  <select
                    id="shade"
                    className="h-[28px] w-full appearance-none rounded-xs border-2 border-[#86b8e8] bg-[#fff4ea] px-[6px] text-[12px] text-[#999999] ring-1 ring-[#b8d6f0]"
                  >
                    <option>Block Group</option>
                  </select>
                  <FaSort size={11} className="pointer-events-none absolute top-2 right-[3px] text-[#888888]" />
                </div>
              </div>
            </div>
            <button className="mt-[7px] h-[35px] w-full rounded border border-[#ececea] pr-[10px] text-[11px] font-bold text-[#888888]">
              CHANGE
            </button>
          </div>
          <div className="pt-[22px] pr-[19px] pl-3 text-center text-[12px] text-[#999999]">
            <p className="leading-5">Add a custom region.</p>
            <button className="mt-[10px] flex h-[35px] w-full items-center justify-center gap-[6px] rounded border border-b-0 border-[#dededc] pr-3 text-[11px] font-bold text-[#888888]">
              ADD <FaPlus size={11} />
            </button>
          </div>
        </div>
      </div>

      <div className="relative ml-14 min-w-0 flex-1">
        <div className="flex items-center gap-[9px] pl-[10px]">
          <button aria-label="Back" className="flex h-9 w-[25px] items-center justify-center rounded border border-[#dddddd] bg-linear-to-b from-white to-[#eaeaea] text-[#555555]">
            <FaChevronLeft size={10} />
          </button>
          <button className="h-[45px] w-[115px] rounded bg-linear-to-b from-[#d07c26] to-[#c06c1c] pl-3 text-left text-[11px] leading-[13px] font-medium text-white">
            <span className="block font-bold">Next</span>
            Confirm Download
          </button>
        </div>
        <svg className="absolute top-[62px] left-[26px] h-3 w-2" viewBox="0 0 8 12" aria-hidden="true">
          <path d="M1 0.5 V9 L3 7.500 L4.500 11 L6 10 L5 7 H7.500Z" fill="#111111" stroke="#ffffff" strokeWidth="0.5" />
        </svg>
        <p className="mt-[66px] text-right text-[11px] leading-[14px] text-[#888888]">
          Previewing:
          <span className="block font-bold">Philadelphia, PA</span>
        </p>
        <div className="mt-[23px]">
          <PreviewMap />
        </div>
      </div>
    </div>
  </div>
);

const App = () => {
  return (
    <div className="flex min-h-screen flex-col overflow-hidden bg-[#f3f3f3] pb-1 font-['Roboto',sans-serif]">
      <Header />
      <NavBar />
      <div className="ml-[18px] flex h-[51px] items-center bg-[#fbfbfb] pl-4">
        <button aria-label="Add bookmark" className="relative mr-[21px] text-[#9078b8]">
          <FaRegStar size={23} />
          <span className="absolute top-0 -right-[3px] flex size-3 items-center justify-center rounded-full bg-[#9078b8] text-white">
            <FaPlus size={8} />
          </span>
        </button>
        <p className="text-[13px] text-[#444444]">Estimated typical (median) income</p>
      </div>
      <main className="relative ml-[18px] flex-1">
        <IncomeMap />
        <div className="relative flex items-start gap-[10px] p-[10px]">
          <DataLayerPanel />
          <DataPointsPanel />
        </div>
      </main>

      <div className="fixed inset-0 flex items-start justify-center bg-black/50 pl-[84px]">
        <DownloadDialog />
      </div>
    </div>
  );
};

export default App;
